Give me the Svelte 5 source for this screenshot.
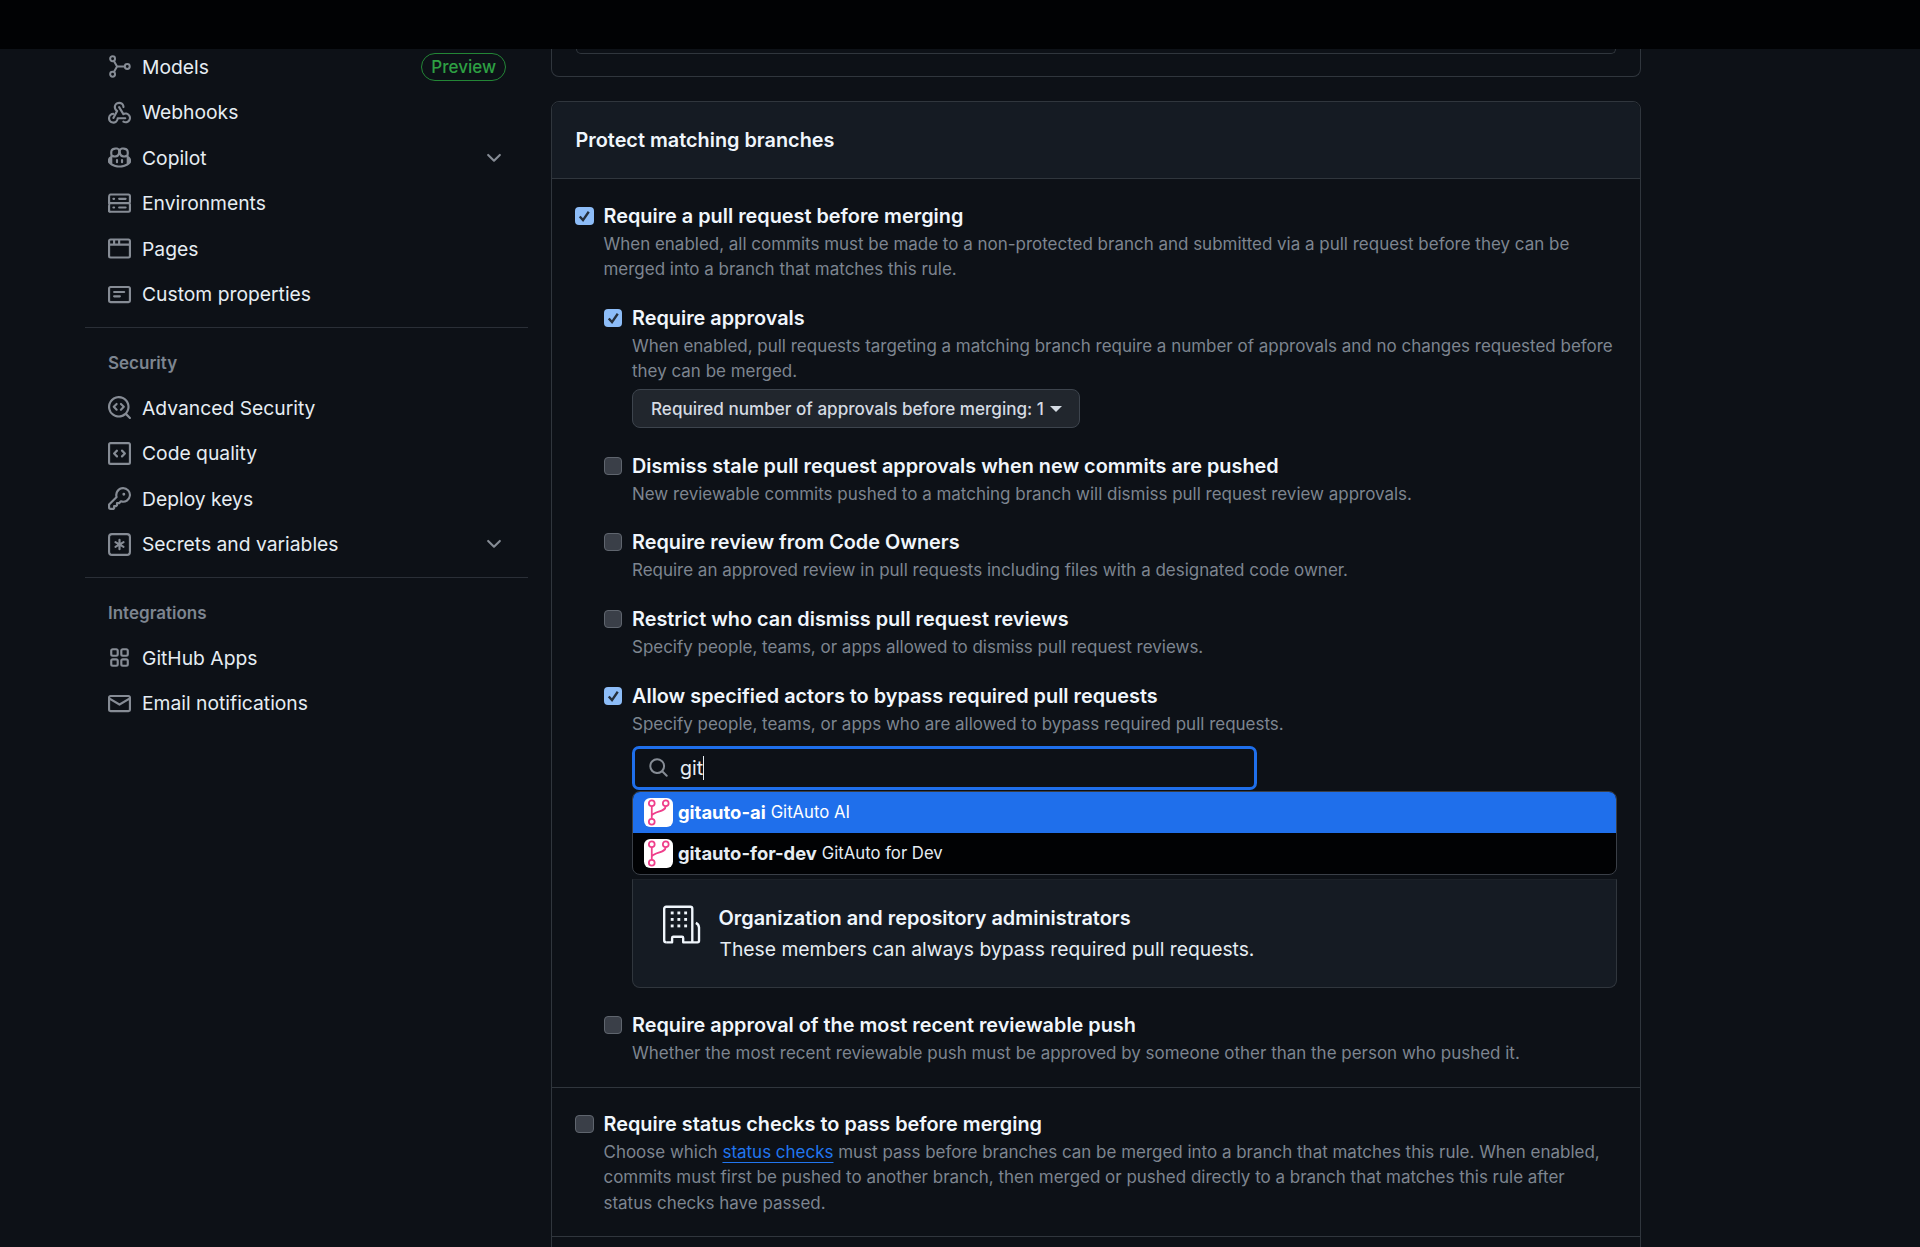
<script lang="ts">
  const icons: Record<string, string[]> = {
    webhook: [
      'M5.5 4.25a2.25 2.25 0 0 1 4.5 0 .75.75 0 0 0 1.5 0 3.75 3.75 0 1 0-6.14 2.889l-2.272 4.258a.75.75 0 0 0 1.324.706L7 7.25a.75.75 0 0 0-.309-1.015A2.25 2.25 0 0 1 5.5 4.25Z',
      'M7.364 3.607a.75.75 0 0 1 1.03.257l2.608 4.349a3.75 3.75 0 1 1-.628 6.785.75.75 0 0 1 .752-1.299 2.25 2.25 0 1 0-.033-3.88.75.75 0 0 1-1.03-.256L7.107 4.636a.75.75 0 0 1 .257-1.03Z',
      'M3.75 8.25a.75.75 0 0 1-.2 1.49 2.25 2.25 0 1 0 2.45 2.26.75.75 0 0 1 .75-.75h5.25a.75.75 0 0 1 0 1.5H7.4A3.75 3.75 0 1 1 3.75 8.25Z'
    ],
    copilot: [
      'M7.998 15.035c-4.562 0-7.873-2.914-7.998-3.749V9.338c.085-.628.677-1.686 1.588-2.065.013-.07.024-.143.036-.218.029-.183.06-.384.126-.612-.201-.508-.254-1.084-.254-1.656 0-.87.128-1.769.693-2.484.579-.733 1.494-1.124 2.724-1.261 1.206-.134 2.262.034 2.944.765.05.053.096.108.139.165.044-.057.094-.112.143-.165.682-.731 1.738-.899 2.944-.765 1.23.137 2.145.528 2.724 1.261.566.715.693 1.614.693 2.484 0 .572-.053 1.148-.254 1.656.066.228.098.429.126.612.012.076.024.148.037.218.924.385 1.522 1.471 1.591 2.095v1.872c0 .766-3.351 3.795-8.002 3.795Zm0-1.485c2.28 0 4.584-1.11 5.002-1.433V7.862l-.023-.116c-.49.21-1.075.291-1.727.291-1.146 0-2.059-.327-2.71-.991A3.222 3.222 0 0 1 8 6.303a3.24 3.24 0 0 1-.544.743c-.65.664-1.563.991-2.71.991-.652 0-1.236-.081-1.727-.291l-.023.116v4.255c.419.323 2.722 1.433 5.002 1.433ZM6.762 2.83c-.193-.206-.637-.413-1.682-.297-1.019.113-1.479.404-1.713.7-.247.312-.369.789-.369 1.554 0 .793.129 1.171.308 1.371.162.181.519.379 1.442.379.853 0 1.339-.235 1.638-.54.315-.322.527-.827.617-1.553.117-.935-.037-1.395-.241-1.614Zm4.155-.297c-1.044-.116-1.488.091-1.681.297-.204.219-.359.679-.242 1.614.091.726.303 1.231.618 1.553.299.305.784.54 1.638.54.922 0 1.28-.198 1.442-.379.179-.2.308-.578.308-1.371 0-.765-.123-1.242-.37-1.554-.233-.296-.693-.587-1.713-.7Z',
      'M6.25 9.037a.75.75 0 0 1 .75.75v1.501a.75.75 0 0 1-1.5 0V9.787a.75.75 0 0 1 .75-.75Zm4.25.75v1.501a.75.75 0 0 1-1.5 0V9.787a.75.75 0 0 1 1.5 0Z'
    ],
    server: [
      'M1.75 1h12.5c.966 0 1.75.784 1.75 1.75v4c0 .372-.116.717-.314 1 .198.283.314.628.314 1v4a1.75 1.75 0 0 1-1.75 1.75H1.75A1.75 1.75 0 0 1 0 13.75v-4c0-.372.116-.717.314-1a1.743 1.743 0 0 1-.314-1v-4C0 1.784.784 1 1.75 1ZM1.5 2.75v4c0 .138.112.25.25.25h12.5a.25.25 0 0 0 .25-.25v-4a.25.25 0 0 0-.25-.25H1.75a.25.25 0 0 0-.25.25Zm.25 5.75a.25.25 0 0 0-.25.25v4c0 .138.112.25.25.25h12.5a.25.25 0 0 0 .25-.25v-4a.25.25 0 0 0-.25-.25ZM7 4.75A.75.75 0 0 1 7.75 4h4.5a.75.75 0 0 1 0 1.5h-4.5A.75.75 0 0 1 7 4.75ZM7.75 10h4.5a.75.75 0 0 1 0 1.5h-4.5a.75.75 0 0 1 0-1.5ZM3 4.75A.75.75 0 0 1 3.75 4h.5a.75.75 0 0 1 0 1.5h-.5A.75.75 0 0 1 3 4.75ZM3.75 10h.5a.75.75 0 0 1 0 1.5h-.5a.75.75 0 0 1 0-1.5Z'
    ],
    browser: [
      'M0 2.75C0 1.784.784 1 1.75 1h12.5c.966 0 1.75.784 1.75 1.75v10.5A1.75 1.75 0 0 1 14.25 15H1.75A1.75 1.75 0 0 1 0 13.25ZM14.5 6h-13v7.25c0 .138.112.25.25.25h12.5a.25.25 0 0 0 .25-.25Zm-6-3.5v2h6v-1.75a.25.25 0 0 0-.25-.25ZM5 2.5v2h2v-2Zm-3.25 0a.25.25 0 0 0-.25.25V4.5h2v-2Z'
    ],
    note: [
      'M0 3.75C0 2.784.784 2 1.75 2h12.5c.966 0 1.75.784 1.75 1.75v8.5A1.75 1.75 0 0 1 14.25 14H1.75A1.75 1.75 0 0 1 0 12.25Zm1.75-.25a.25.25 0 0 0-.25.25v8.5c0 .138.112.25.25.25h12.5a.25.25 0 0 0 .25-.25v-8.5a.25.25 0 0 0-.25-.25ZM3.5 6.25a.75.75 0 0 1 .75-.75h7a.75.75 0 0 1 0 1.5h-7a.75.75 0 0 1-.75-.75Zm.75 2.25h4a.75.75 0 0 1 0 1.5h-4a.75.75 0 0 1 0-1.5Z'
    ],
    codescan: [
      'M8.47 4.97a.75.75 0 0 0 0 1.06L9.94 7.5 8.47 8.97a.75.75 0 1 0 1.06 1.06l2-2a.75.75 0 0 0 0-1.06l-2-2a.75.75 0 0 0-1.06 0ZM6.53 6.03a.75.75 0 0 0-1.06-1.06l-2 2a.75.75 0 0 0 0 1.06l2 2a.75.75 0 1 0 1.06-1.06L5.06 7.5l1.47-1.47Z',
      'M12.246 13.307a7.501 7.501 0 1 1 1.06-1.06l2.474 2.473a.749.749 0 0 1-.326 1.275.749.749 0 0 1-.734-.215ZM1.5 7.5a6.002 6.002 0 0 0 3.608 5.504 6.002 6.002 0 0 0 6.486-1.117.75.75 0 0 1 .292-.293A6 6 0 1 0 1.5 7.5Z'
    ],
    codesquare: [
      'M0 1.75C0 .784.784 0 1.75 0h12.5C15.216 0 16 .784 16 1.75v12.5A1.75 1.75 0 0 1 14.25 16H1.75A1.75 1.75 0 0 1 0 14.25Zm1.75-.25a.25.25 0 0 0-.25.25v12.5c0 .138.112.25.25.25h12.5a.25.25 0 0 0 .25-.25V1.75a.25.25 0 0 0-.25-.25Zm7.47 3.97a.75.75 0 0 1 1.06 0l2 2a.75.75 0 0 1 0 1.06l-2 2a.749.749 0 0 1-1.275-.326.749.749 0 0 1 .215-.734L10.69 8 9.22 6.53a.75.75 0 0 1 0-1.06ZM6.78 6.53 5.31 8l1.47 1.47a.749.749 0 0 1-.326 1.275.749.749 0 0 1-.734-.215l-2-2a.75.75 0 0 1 0-1.06l2-2a.751.751 0 0 1 1.042.018.751.751 0 0 1 .018 1.042Z'
    ],
    key: [
      'M10.5 0a5.499 5.499 0 1 1-1.288 10.848l-.932.932a.749.749 0 0 1-.53.22H7v.75a.749.749 0 0 1-.22.53l-.5.5a.749.749 0 0 1-.53.22H5v.75a.749.749 0 0 1-.22.53l-.5.5a.749.749 0 0 1-.53.22h-2A1.75 1.75 0 0 1 0 14.25v-2c0-.199.079-.389.22-.53l4.932-4.932A5.5 5.5 0 0 1 10.5 0Zm-4 5.5c-.001.431.069.86.205 1.269a.75.75 0 0 1-.181.768L1.5 12.56v1.69c0 .138.112.25.25.25h1.69l.06-.06v-1.19a.75.75 0 0 1 .75-.75h1.19l.06-.06v-1.19a.75.75 0 0 1 .75-.75h1.19l1.023-1.025a.75.75 0 0 1 .768-.18A4 4 0 1 0 6.5 5.5ZM11 6a1 1 0 1 1 0-2 1 1 0 0 1 0 2Z'
    ],
    asterisk: [
      'M0 2.75A2.75 2.75 0 0 1 2.75 0h10.5A2.75 2.75 0 0 1 16 2.75v10.5A2.75 2.75 0 0 1 13.25 16H2.75A2.75 2.75 0 0 1 0 13.25ZM2.75 1.5c-.69 0-1.25.56-1.25 1.25v10.5c0 .69.56 1.25 1.25 1.25h10.5c.69 0 1.25-.56 1.25-1.25V2.75c0-.69-.56-1.25-1.25-1.25Z',
      'M8 4a.75.75 0 0 1 .75.75V6.7l1.69-.975a.75.75 0 0 1 .75 1.3L9.5 8l1.69.976a.75.75 0 0 1-.75 1.298L8.75 9.3v1.95a.75.75 0 0 1-1.5 0V9.299l-1.69.976a.75.75 0 0 1-.75-1.3L6.5 8l-1.69-.975a.75.75 0 0 1 .75-1.3l1.69.976V4.75A.75.75 0 0 1 8 4Z'
    ],
    apps: [
      'M1.5 3.25c0-.966.784-1.75 1.75-1.75h2.5c.966 0 1.75.784 1.75 1.75v2.5A1.75 1.75 0 0 1 5.75 7.5h-2.5A1.75 1.75 0 0 1 1.5 5.75Zm7 0c0-.966.784-1.75 1.75-1.75h2.5c.966 0 1.75.784 1.75 1.75v2.5a1.75 1.75 0 0 1-1.75 1.75h-2.5A1.75 1.75 0 0 1 8.5 5.75Zm-7 7c0-.966.784-1.75 1.75-1.75h2.5c.966 0 1.75.784 1.75 1.75v2.5a1.75 1.75 0 0 1-1.75 1.75h-2.5a1.75 1.75 0 0 1-1.75-1.75Zm7 0c0-.966.784-1.75 1.75-1.75h2.5c.966 0 1.75.784 1.75 1.75v2.5a1.75 1.75 0 0 1-1.75 1.75h-2.5a1.75 1.75 0 0 1-1.75-1.75ZM3.25 3a.25.25 0 0 0-.25.25v2.5c0 .138.112.25.25.25h2.5A.25.25 0 0 0 6 5.75v-2.5A.25.25 0 0 0 5.75 3Zm7 0a.25.25 0 0 0-.25.25v2.5c0 .138.112.25.25.25h2.5a.25.25 0 0 0 .25-.25v-2.5a.25.25 0 0 0-.25-.25Zm-7 7a.25.25 0 0 0-.25.25v2.5c0 .138.112.25.25.25h2.5a.25.25 0 0 0 .25-.25v-2.5a.25.25 0 0 0-.25-.25Zm7 0a.25.25 0 0 0-.25.25v2.5c0 .138.112.25.25.25h2.5a.25.25 0 0 0 .25-.25v-2.5a.25.25 0 0 0-.25-.25Z'
    ],
    mail: [
      'M1.75 2h12.5c.966 0 1.75.784 1.75 1.75v8.5A1.75 1.75 0 0 1 14.25 14H1.75A1.75 1.75 0 0 1 0 12.25v-8.5C0 2.784.784 2 1.75 2ZM1.5 12.251c0 .138.112.25.25.25h12.5a.25.25 0 0 0 .25-.25V5.809L8.38 9.397a.75.75 0 0 1-.76 0L1.5 5.809v6.442Zm13-8.181v-.32a.25.25 0 0 0-.25-.25H1.75a.25.25 0 0 0-.25.25v.32L8 7.88Z'
    ],
    chevron: [
      'M12.78 5.22a.749.749 0 0 1 0 1.06l-4.25 4.25a.749.749 0 0 1-1.06 0L3.22 6.28a.749.749 0 1 1 1.06-1.06L8 8.939l3.72-3.719a.749.749 0 0 1 1.06 0Z'
    ],
    search: [
      'M10.68 11.74a6 6 0 0 1-7.922-8.982 6 6 0 0 1 8.982 7.922l3.04 3.04a.749.749 0 0 1-.326 1.275.749.749 0 0 1-.734-.215ZM11.5 7a4.499 4.499 0 1 0-8.997 0A4.499 4.499 0 0 0 11.5 7Z'
    ]
  }

  const topNav = [
    { label: 'Models', icon: 'models', preview: true },
    { label: 'Webhooks', icon: 'webhook' },
    { label: 'Copilot', icon: 'copilot', more: true },
    { label: 'Environments', icon: 'server' },
    { label: 'Pages', icon: 'browser' },
    { label: 'Custom properties', icon: 'note' }
  ]
  const securityNav = [
    { label: 'Advanced Security', icon: 'codescan' },
    { label: 'Code quality', icon: 'codesquare' },
    { label: 'Deploy keys', icon: 'key' },
    { label: 'Secrets and variables', icon: 'asterisk', more: true }
  ]
  const integrationNav = [
    { label: 'GitHub Apps', icon: 'apps' },
    { label: 'Email notifications', icon: 'mail' }
  ]
  const apps = [
    { slug: 'gitauto-ai', name: 'GitAuto AI', active: true },
    { slug: 'gitauto-for-dev', name: 'GitAuto for Dev', active: false }
  ]
</script>

{#snippet navRow(item)}
  <a class="nav-row" href="#top">
    {#if item.icon === 'models'}
      <svg class="nav-icon" viewBox="0 0 16 16" fill="none" stroke="currentColor" stroke-width="1.4">
        <circle cx="3.2" cy="2.6" r="1.7" />
        <circle cx="3.2" cy="13.4" r="1.7" />
        <circle cx="13.4" cy="8" r="1.7" />
        <path d="M4.1 4.1 6.3 8 4.1 11.9M6.3 8h5.4" />
      </svg>
    {:else}
      <svg class="nav-icon" viewBox="0 0 16 16" fill="currentColor">
        {#each icons[item.icon] as d}<path {d} />{/each}
      </svg>
    {/if}
    <span class="nav-label">{item.label}</span>
    {#if item.preview}<span class="pill">Preview</span>{/if}
    {#if item.more}
      <svg class="nav-chevron" viewBox="0 0 16 16" fill="currentColor"><path d={icons.chevron[0]} /></svg>
    {/if}
  </a>
{/snippet}

{#snippet box(checked)}
  <span class="box" class:checked>
    {#if checked}
      <svg viewBox="0 0 16 16" fill="none" stroke="#26303c" stroke-width="2.1"><path d="M4 8.4 6.9 11.6 12 4.2" /></svg>
    {/if}
  </span>
{/snippet}

{#snippet avatar()}
  <svg class="avatar" viewBox="0 0 28 28">
    <rect width="28" height="28" rx="6" fill="#fff" />
    <g fill="none" stroke="#ef3f8b" stroke-width="1.7">
      <circle cx="7.5" cy="5" r="2.8" />
      <circle cx="21" cy="5" r="2.8" />
      <circle cx="7.5" cy="23" r="2.8" />
      <path d="M7.5 7.8v12.4M21 7.8c0 6-10.5 4.5-13.5 9" />
    </g>
  </svg>
{/snippet}

<div class="page" id="top">
  <div class="topbar"></div>
  <div class="columns">
    <aside class="sidebar">
      {#each topNav as item}{@render navRow(item)}{/each}
      <hr class="side-rule" />
      <h3 class="side-head">Security</h3>
      {#each securityNav as item}{@render navRow(item)}{/each}
      <hr class="side-rule" />
      <h3 class="side-head">Integrations</h3>
      {#each integrationNav as item}{@render navRow(item)}{/each}
    </aside>

    <main class="main">
      <div class="panel-cut"><div class="inner-cut"></div></div>

      <section class="panel">
        <header class="panel-head">Protect matching branches</header>

        <div class="section first">
          <div class="opt">
            {@render box(true)}
            <div>
              <div class="opt-title">Require a pull request before merging</div>
              <p class="opt-desc">When enabled, all commits must be made to a non-protected branch and submitted via a pull request before they can be<br />merged into a branch that matches this rule.</p>
            </div>
          </div>

          <div class="nested">
            <div class="opt">
              {@render box(true)}
              <div>
                <div class="opt-title">Require approvals</div>
                <p class="opt-desc">When enabled, pull requests targeting a matching branch require a number of approvals and no changes requested before<br />they can be merged.</p>
                <button class="select" type="button">Required number of approvals before merging: 1<span class="caret"></span></button>
              </div>
            </div>

            <div class="opt">
              {@render box(false)}
              <div>
                <div class="opt-title">Dismiss stale pull request approvals when new commits are pushed</div>
                <p class="opt-desc">New reviewable commits pushed to a matching branch will dismiss pull request review approvals.</p>
              </div>
            </div>

            <div class="opt">
              {@render box(false)}
              <div>
                <div class="opt-title">Require review from Code Owners</div>
                <p class="opt-desc">Require an approved review in pull requests including files with a designated code owner.</p>
              </div>
            </div>

            <div class="opt">
              {@render box(false)}
              <div>
                <div class="opt-title">Restrict who can dismiss pull request reviews</div>
                <p class="opt-desc">Specify people, teams, or apps allowed to dismiss pull request reviews.</p>
              </div>
            </div>

            <div class="opt">
              {@render box(true)}
              <div>
                <div class="opt-title">Allow specified actors to bypass required pull requests</div>
                <p class="opt-desc">Specify people, teams, or apps who are allowed to bypass required pull requests.</p>
              </div>
            </div>

            <div class="bypass">
              <div class="search">
                <svg class="search-icon" viewBox="0 0 16 16" fill="currentColor"><path d={icons.search[0]} /></svg>
                <span class="search-text">git</span><span class="cursor"></span>
              </div>

              <ul class="results">
                {#each apps as app}
                  <li class="result" class:active={app.active}>
                    {@render avatar()}
                    <strong>{app.slug}</strong>
                    <span>{app.name}</span>
                  </li>
                {/each}
              </ul>

              <div class="admins">
                <svg class="org-icon" viewBox="0 0 24 24" fill="none" stroke="currentColor" stroke-width="1.5" stroke-linejoin="round">
                  <path d="M2 23.25A1.25 1.25 0 0 1 .75 22V2A1.25 1.25 0 0 1 2 .75h15.25A1.25 1.25 0 0 1 18.5 2v21.25" />
                  <path d="M2 23.25h3.75V20.5a.75.75 0 0 1 .75-.75h5.5a.75.75 0 0 1 .75.75v2.75h9a1 1 0 0 0 1-1V14a3.5 3.5 0 0 0-2-3" />
                  <g fill="currentColor" stroke="none">
                    {#each [4.7, 8.8, 12.9] as y}
                      {#each [5.8, 10, 14.3] as x}<rect x={x - 0.9} y={y - 0.9} width="1.8" height="1.8" />{/each}
                    {/each}
                  </g>
                </svg>
                <div>
                  <div class="admins-title">Organization and repository administrators</div>
                  <div class="admins-desc">These members can always bypass required pull requests.</div>
                </div>
              </div>
            </div>

            <div class="opt last">
              {@render box(false)}
              <div>
                <div class="opt-title">Require approval of the most recent reviewable push</div>
                <p class="opt-desc">Whether the most recent reviewable push must be approved by someone other than the person who pushed it.</p>
              </div>
            </div>
          </div>
        </div>

        <div class="section second">
          <div class="opt last">
            {@render box(false)}
            <div>
              <div class="opt-title">Require status checks to pass before merging</div>
              <p class="opt-desc">Choose which <a class="link" href="#top">status checks</a> must pass before branches can be merged into a branch that matches this rule. When enabled,<br />commits must first be pushed to another branch, then merged or pushed directly to a branch that matches this rule after<br />status checks have passed.</p>
            </div>
          </div>
        </div>

        <div class="section tail"></div>
      </section>
    </main>
  </div>
</div>

<style>
  :global(body) {
    margin: 0;
    background: #0d1117;
  }
  .page {
    height: 1247px;
    overflow: hidden;
    display: flex;
    flex-direction: column;
    background: #0d1117;
    color: #e6edf3;
    font-family: Inter, "Liberation Sans", sans-serif;
  }
  .topbar {
    flex: none;
    height: 49px;
    background: #010204;
    position: relative;
    z-index: 2;
  }
  .columns {
    display: flex;
    gap: 23px;
    padding-left: 85px;
  }

  .sidebar {
    flex: none;
    width: 443px;
    margin-top: -5px;
  }
  .nav-row {
    display: flex;
    align-items: center;
    gap: 11px;
    height: 45.5px;
    padding: 0 23px;
    color: #e6edf3;
    text-decoration: none;
    font-size: 19.3px;
  }
  .nav-icon {
    flex: none;
    width: 23px;
    height: 23px;
    color: #868c95;
  }
  .nav-label {
    flex: 1;
  }
  .nav-chevron {
    flex: none;
    width: 22px;
    height: 22px;
    color: #868c95;
  }
  .pill {
    height: 26px;
    line-height: 26px;
    margin-right: -1px;
    padding: 0 9px;
    border: 1px solid #238636;
    border-radius: 14px;
    color: #2ea043;
    font-size: 17px;
    font-weight: 500;
  }
  .side-rule {
    height: 1px;
    margin: 10px 0 23px;
    border: 0;
    background: #2a2f37;
  }
  .side-head {
    margin: 0 0 10px;
    padding-left: 23px;
    color: #7d8590;
    font-size: 17px;
    line-height: 24px;
    font-weight: 600;
  }

  .main {
    flex: none;
    width: 1090px;
  }
  .panel-cut {
    box-sizing: border-box;
    height: 28px;
    padding: 0 24px;
    border: 1px solid #30363d;
    border-top: 0;
    border-radius: 0 0 8px 8px;
  }
  .inner-cut {
    height: 4px;
    border: 1px solid #30363d;
    border-top: 0;
    border-radius: 0 0 8px 8px;
  }
  .panel {
    margin-top: 24px;
    border: 1px solid #30363d;
    border-radius: 8px;
  }
  .panel-head {
    height: 76px;
    line-height: 76px;
    padding-left: 23.5px;
    background: #151b23;
    border-radius: 8px 8px 0 0;
    font-size: 19.85px;
    font-weight: 600;
    color: #f0f6fc;
  }
  .section {
    padding: 23px 24px 22px 23px;
    border-top: 1px solid #30363d;
  }
  .section.first {
    padding-top: 22.5px;
    padding-bottom: 20px;
  }
  .section.second {
    padding-top: 22px;
    padding-bottom: 19.5px;
  }
  .tail {
    height: 40px;
  }
  .nested {
    margin: 19.2px 0 0 28.5px;
  }
  .opt {
    display: flex;
    gap: 10px;
    margin-bottom: 21.2px;
  }
  .opt.last {
    margin-bottom: 0;
  }
  .opt-title {
    font-size: 19.85px;
    line-height: 28px;
    font-weight: 600;
    color: #f0f6fc;
  }
  .opt-desc {
    margin: 2px 0 0;
    font-size: 16.98px;
    line-height: 25.6px;
    color: #7d8590;
  }
  .box {
    flex: none;
    box-sizing: border-box;
    width: 18.5px;
    height: 18px;
    margin-top: 5px;
    border: 1px solid #5f656e;
    border-radius: 4px;
    background: #3a3f48;
  }
  .box.checked {
    border: 0;
    background: #8dbdf8;
  }
  .box svg {
    display: block;
    width: 100%;
    height: 100%;
  }
  .link {
    color: #2176f0;
    text-decoration: underline;
    text-underline-offset: 4px;
    text-decoration-thickness: 1px;
  }

  .select {
    display: flex;
    align-items: center;
    box-sizing: border-box;
    height: 39px;
    margin: 4.2px 0 2.2px;
    padding: 0 17px 0 18px;
    background: #21262d;
    border: 1px solid #3d444d;
    border-radius: 8px;
    color: #d5dbe3;
    font: 500 17.1px Inter, "Liberation Sans", sans-serif;
  }
  .caret {
    width: 0;
    height: 0;
    margin-left: 6px;
    border: 6px solid transparent;
    border-top-color: #d5dbe3;
    border-bottom: 0;
  }

  .bypass {
    margin: -13px 0 23px 28px;
  }
  .search {
    display: flex;
    align-items: center;
    box-sizing: border-box;
    width: 625px;
    height: 44px;
    padding-left: 13.5px;
    border: 3px solid #1f6feb;
    border-radius: 7px;
    background: #0d1117;
    font-size: 19.6px;
  }
  .search-icon {
    flex: none;
    width: 21px;
    height: 21px;
    margin-right: 11px;
    color: #868c95;
  }
  .cursor {
    width: 1px;
    height: 24px;
    background: #e6edf3;
  }
  .results {
    margin: 1.5px 0 4px;
    padding: 0;
    list-style: none;
    width: 985px;
    box-sizing: border-box;
    border: 1px solid #3a3f47;
    border-radius: 8px;
    overflow: hidden;
    background: #010204;
  }
  .result {
    display: flex;
    align-items: center;
    height: 41px;
    padding-left: 11px;
    font-size: 16.7px;
    color: #e6edf3;
  }
  .result.active {
    background: #1f6feb;
    color: #fff;
  }
  .result strong {
    margin: -1px 5px 0 5.5px;
    font-size: 18.4px;
    font-weight: 700;
  }
  .result span {
    margin-top: -1px;
  }
  .avatar {
    flex: none;
    width: 29px;
    height: 29px;
  }
  .admins {
    display: flex;
    align-items: center;
    gap: 18px;
    box-sizing: border-box;
    width: 985px;
    height: 109px;
    padding-left: 30px;
    background: #151b23;
    border: 1px solid #30363d;
    border-top-color: #1c2128;
    border-radius: 0 0 8px 8px;
    font-size: 19.3px;
  }
  .org-icon {
    flex: none;
    width: 38px;
    height: 39px;
    margin-bottom: 18px;
    color: #f0f6fc;
  }
  .admins-title {
    font-size: 19.9px;
    font-weight: 600;
    line-height: 28px;
    color: #f0f6fc;
  }
  .admins-desc {
    margin: 3px 0 0 1px;
    line-height: 28px;
    color: #e6edf3;
  }
</style>
